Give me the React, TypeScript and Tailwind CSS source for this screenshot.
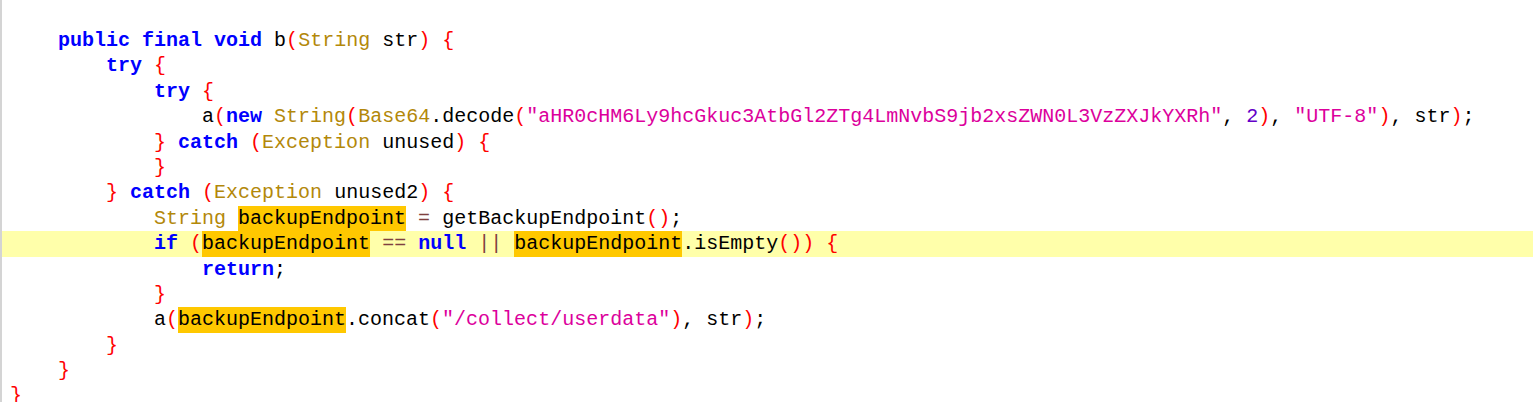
import React from "react"

type Kind = "kw" | "type" | "sep" | "op" | "str" | "num" | "id" | "mark" | "ws"
type Tok = [string, Kind]

const styles: Record<Kind, string> = {
  kw: "text-[#0000ff] font-bold",
  type: "text-[#b3880a]",
  sep: "text-[#ff0000]",
  op: "text-[#804040]",
  str: "text-[#dc009c]",
  num: "text-[#6400c8]",
  id: "text-black",
  mark: "inline-block bg-[#ffc800] text-black",
  ws: "",
}

const b64 = "aHR0cHM6Ly9hcGkuc3AtbGl2ZTg4LmNvbS9jb2xsZWN0L3VzZXJkYXRh"

// one entry per source line, already split into coloured tokens
const lines: Tok[][] = [
  [["    ", "ws"], ["public", "kw"], [" ", "ws"], ["final", "kw"], [" ", "ws"], ["void", "kw"], [" b", "id"], ["(", "sep"], ["String", "type"], [" str", "id"], [")", "sep"], [" ", "ws"], ["{", "sep"]],
  [["        ", "ws"], ["try", "kw"], [" ", "ws"], ["{", "sep"]],
  [["            ", "ws"], ["try", "kw"], [" ", "ws"], ["{", "sep"]],
  [
    ["                a", "id"], ["(", "sep"], ["new", "kw"], [" ", "ws"], ["String", "type"], ["(", "sep"], ["Base64", "type"], [".decode", "id"], ["(", "sep"],
    ['"' + b64 + '"', "str"], [", ", "id"], ["2", "num"], [")", "sep"], [", ", "id"], ['"UTF-8"', "str"], [")", "sep"], [", str", "id"], [")", "sep"], [";", "id"],
  ],
  [["            ", "ws"], ["}", "sep"], [" ", "ws"], ["catch", "kw"], [" ", "ws"], ["(", "sep"], ["Exception", "type"], [" unused", "id"], [")", "sep"], [" ", "ws"], ["{", "sep"]],
  [["            ", "ws"], ["}", "sep"]],
  [["        ", "ws"], ["}", "sep"], [" ", "ws"], ["catch", "kw"], [" ", "ws"], ["(", "sep"], ["Exception", "type"], [" unused2", "id"], [")", "sep"], [" ", "ws"], ["{", "sep"]],
  [["            ", "ws"], ["String", "type"], [" ", "ws"], ["backupEndpoint", "mark"], [" ", "ws"], ["=", "op"], [" getBackupEndpoint", "id"], ["()", "sep"], [";", "id"]],
  [
    ["            ", "ws"], ["if", "kw"], [" ", "ws"], ["(", "sep"], ["backupEndpoint", "mark"], [" ", "ws"], ["==", "op"], [" ", "ws"], ["null", "kw"], [" ", "ws"], ["||", "op"], [" ", "ws"],
    ["backupEndpoint", "mark"], [".isEmpty", "id"], ["())", "sep"], [" ", "ws"], ["{", "sep"],
  ],
  [["                ", "ws"], ["return", "kw"], [";", "id"]],
  [["            ", "ws"], ["}", "sep"]],
  [["            a", "id"], ["(", "sep"], ["backupEndpoint", "mark"], [".concat", "id"], ["(", "sep"], ['"/collect/userdata"', "str"], [")", "sep"], [", str", "id"], [")", "sep"], [";", "id"]],
  [["        ", "ws"], ["}", "sep"]],
  [["    ", "ws"], ["}", "sep"]],
  [["}", "sep"]],
]

const currentLine = 8

export default function App() {
  return (
    <div
      className="h-[402px] overflow-hidden bg-white border-l-2 border-[#d4d4d4] pt-[28px] text-[20px] leading-[25.4px]"
      style={{ fontFamily: '"Liberation Mono", "DejaVu Sans Mono", monospace' }}
    >
      {lines.map((toks, i) => (
        <div
          key={i}
          className={`h-[25.4px] whitespace-pre pl-[8px] ${i === currentLine ? "bg-[#ffffaa]" : ""}`}
        >
          {toks.map(([text, kind], j) => (
            <span key={j} className={styles[kind]}>
              {text}
            </span>
          ))}
        </div>
      ))}
    </div>
  )
}
